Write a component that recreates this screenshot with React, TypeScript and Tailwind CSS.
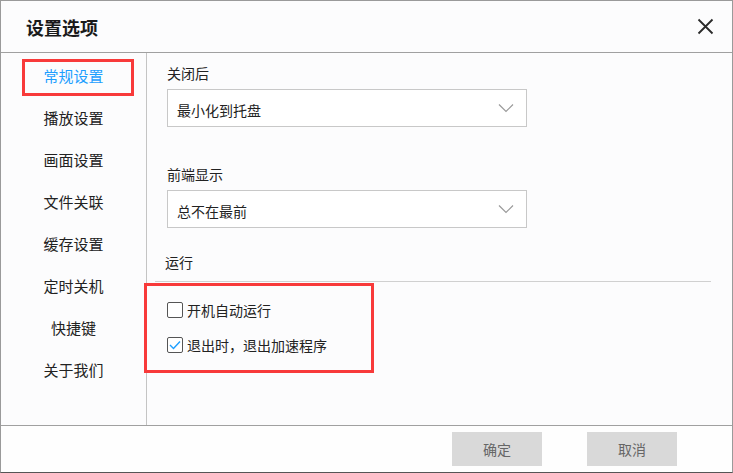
import React from "react";

const font = { fontFamily: '"Noto Sans CJK SC", "Noto Sans", sans-serif' };

const navItems = ["常规设置", "播放设置", "画面设置", "文件关联", "缓存设置", "定时关机", "快捷键", "关于我们"];

function Chevron() {
  return (
    <svg width="16" height="10" viewBox="0 0 16 10" className="block">
      <path d="M1 1.5 L8 8.5 L15 1.5" fill="none" stroke="#9a9a9a" strokeWidth="1.2" />
    </svg>
  );
}

function Select({ value }: { value: string }) {
  return (
    <div className="w-[360px] h-[38px] border border-[#c8c8c8] bg-white flex items-center justify-between pl-[9px] pr-[12px]">
      <span className="text-[14px] text-[#222] leading-[20px] pt-[4px]">{value}</span>
      <Chevron />
    </div>
  );
}

function Checkbox({ checked, label }: { checked: boolean; label: string }) {
  return (
    <div className="flex items-center h-[20px]">
      <div className="w-[16px] h-[16px] border border-[#555] rounded-[2px] bg-white flex items-center justify-center">
        {checked && (
          <svg width="12" height="10" viewBox="0 0 12 10">
            <path d="M1 5 L4.5 8.5 L11 1.5" fill="none" stroke="#1e9fff" strokeWidth="1.4" />
          </svg>
        )}
      </div>
      <span className="ml-[4px] text-[14px] text-[#222] leading-[20px]">{label}</span>
    </div>
  );
}

export default function App() {
  return (
    <div style={font} className="w-[733px] h-[473px] border border-[#9a9a9a] border-b-[#555] bg-[#fcfcfd] flex flex-col overflow-hidden">
      <div className="h-[52px] shrink-0 border-b border-[#a0a0a0] flex items-center justify-between pl-[25px] pr-[18px]">
        <span className="text-[18px] font-bold text-[#1a1a1a] leading-[24px]">设置选项</span>
        <svg width="17" height="17" viewBox="0 0 17 17" className="block">
          <path d="M1.5 1.5 L15.5 15.5 M15.5 1.5 L1.5 15.5" stroke="#2a2a2a" strokeWidth="1.8" />
        </svg>
      </div>
      <div className="relative h-[372px] shrink-0 flex">
        <div className="w-[146px] shrink-0 border-r border-[#c4c4c4] pt-[2px] flex flex-col">
          {navItems.map((item, i) => (
            <div
              key={item}
              className={
                "h-[42px] flex items-center justify-center text-[15px] leading-[20px] " +
                (i === 0 ? "text-[#1e9fff]" : "text-[#222]")
              }
            >
              {item}
            </div>
          ))}
        </div>
        <div className="flex-1 flex flex-col pl-[20px]">
          <div className="mt-[10px] text-[14px] leading-[20px] text-[#222]">关闭后</div>
          <div className="mt-[6px]">
            <Select value="最小化到托盘" />
          </div>
          <div className="mt-[37px] text-[14px] leading-[20px] text-[#222]">前端显示</div>
          <div className="mt-[6px]">
            <Select value="总不在最前" />
          </div>
          <div className="mt-[24px] -ml-[2px] text-[14px] leading-[20px] text-[#222]">运行</div>
          <div className="mt-[9px] -ml-[12px] mr-[21px] h-px bg-[#d0d0d0]" />
          <div className="mt-[18px]">
            <Checkbox checked={false} label="开机自动运行" />
          </div>
          <div className="mt-[15px]">
            <Checkbox checked={true} label="退出时，退出加速程序" />
          </div>
        </div>
        <div className="absolute left-[21px] top-[6px] w-[112px] h-[37px] border-[3px] border-[#f83a3a] pointer-events-none" />
        <div className="absolute left-[143px] top-[230px] w-[230px] h-[90px] border-[3px] border-[#f83a3a] pointer-events-none" />
      </div>
      <div className="flex-1 border-t border-[#a0a0a0] bg-[#fefefe] flex items-center justify-end pr-[55px] gap-[45px]">
        <div className="w-[90px] h-[34px] bg-[#d9d9d9] flex items-center justify-center text-[14px] text-[#666]">确定</div>
        <div className="w-[90px] h-[34px] bg-[#d9d9d9] flex items-center justify-center text-[14px] text-[#666]">取消</div>
      </div>
    </div>
  );
}
